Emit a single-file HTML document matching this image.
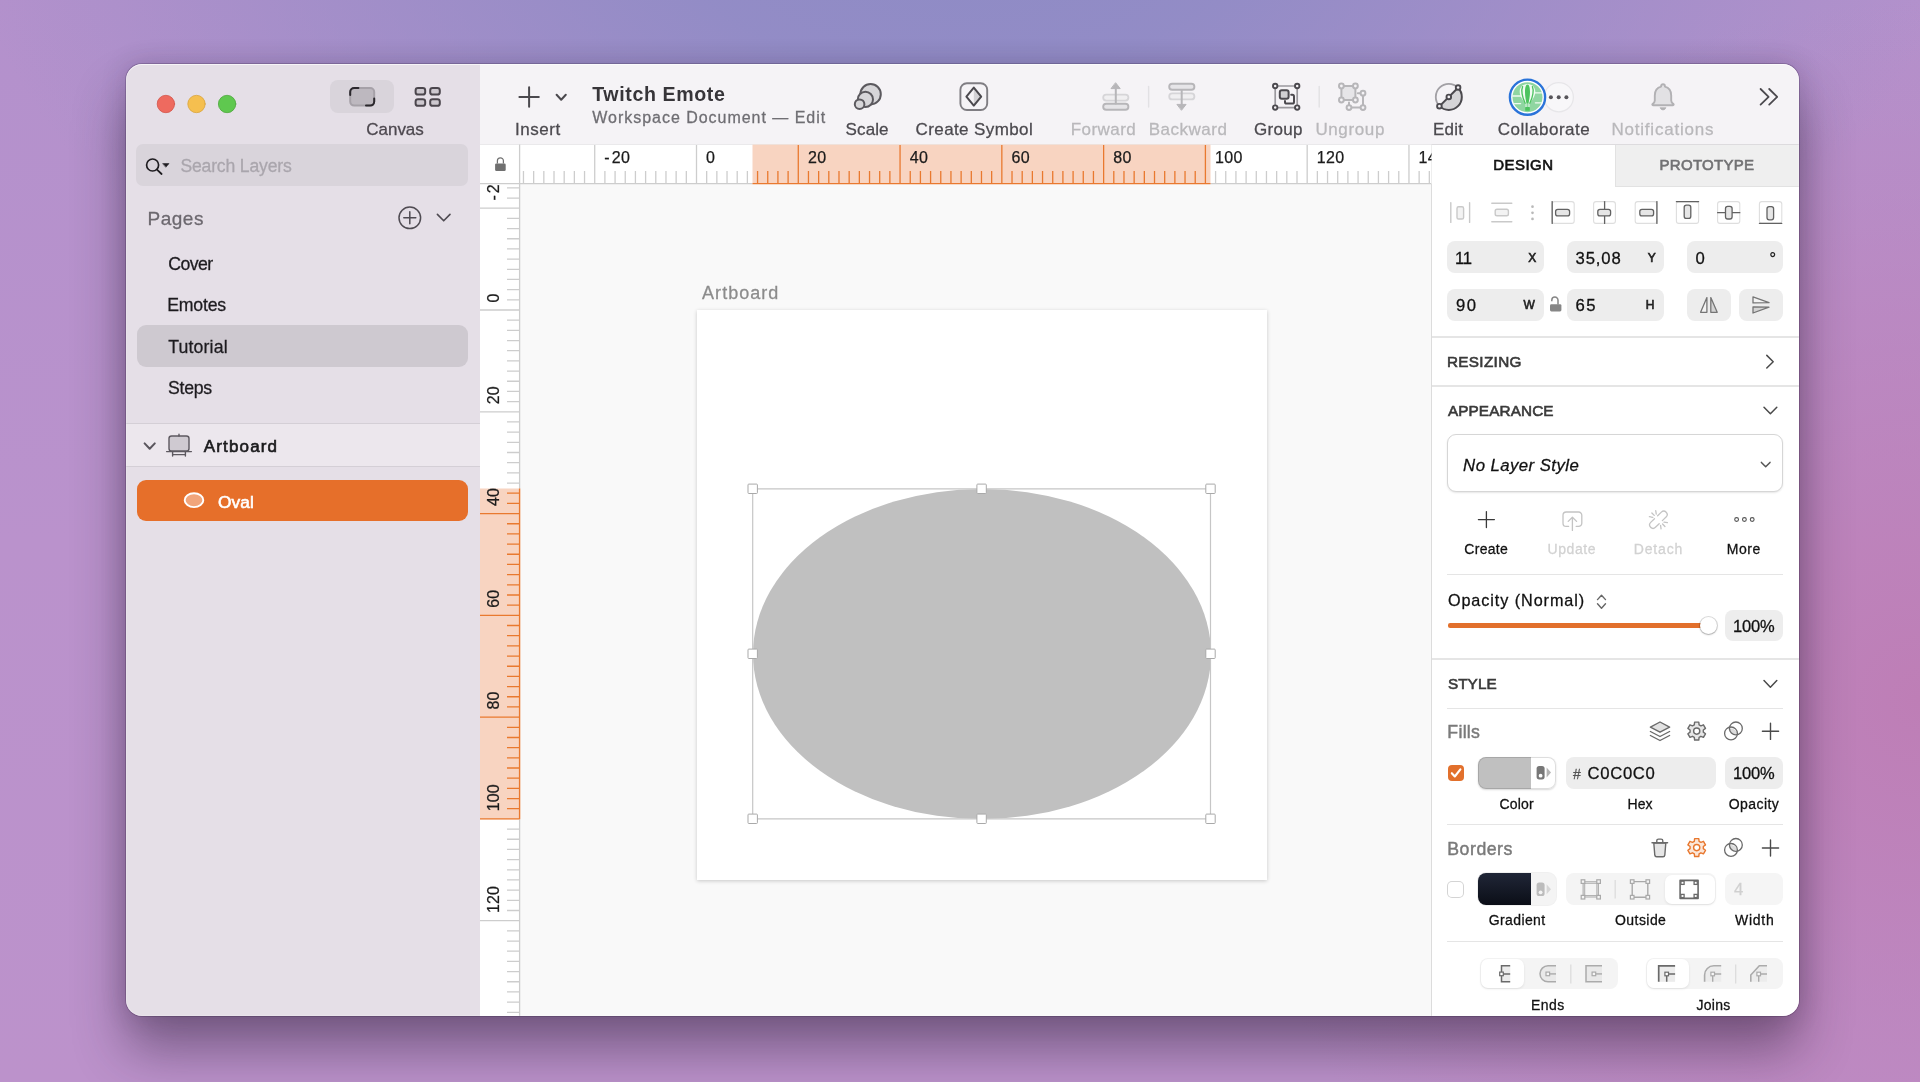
<!DOCTYPE html>
<html lang="en">
<head>
<meta charset="utf-8">
<title>Twitch Emote — Sketch</title>
<style>
html,body{margin:0;padding:0;}
body{width:1920px;height:1082px;overflow:hidden;position:relative;font-family:"Liberation Sans",sans-serif;
 background:
  radial-gradient(ellipse 990px 560px at 960px -90px, rgba(141,139,197,1) 0%, rgba(141,139,197,.85) 30%, rgba(141,139,197,0) 100%),
  radial-gradient(ellipse 700px 700px at 1920px 700px, rgba(190,126,182,1) 0%, rgba(190,126,182,0) 100%),
  linear-gradient(180deg,#b391cc 0%,#ba92cc 50%,#bc92cb 100%);
}
.abs{position:absolute;}
.t{position:absolute;white-space:nowrap;line-height:1;-webkit-text-stroke:.28px currentColor;}
.t.b{-webkit-text-stroke:0;}
.t.s{-webkit-text-stroke:.62px currentColor;}
.t.m{-webkit-text-stroke:.45px currentColor;}
#shadow{position:absolute;left:126px;top:64px;width:1673px;height:952px;border-radius:16px;
 box-shadow:0 34px 52px rgba(35,22,45,.44),0 0 26px rgba(35,20,50,.17),0 0 0 1px rgba(50,35,65,.24);}
#win{position:absolute;left:126px;top:64px;width:1673px;height:952px;overflow:hidden;border-radius:16px;will-change:transform;}
#in{position:absolute;left:-126px;top:-64px;width:1920px;height:1082px;}
#sidebar{left:126px;top:64px;width:354px;height:952px;background:#e5dfe7;}
#toolbar{left:480px;top:64px;width:1320px;height:80px;background:#f5f3f6;}
#tbline{left:480px;top:144px;width:1320px;height:1px;background:#dddbde;}
#canvas{left:520px;top:184px;width:911px;height:832px;background:#f9f9f9;}
#inspector{left:1432px;top:145px;width:368px;height:871px;background:#fff;}
#insline{left:1431px;top:145px;width:1px;height:871px;background:#dcdcdc;}
.r{position:absolute;border-radius:8px;background:#ededed;}
.hl{position:absolute;height:1px;background:#e5e5e5;}
</style>
</head>
<body>
<div id="shadow"></div>
<div id="win"><div id="in">
 <div id="sidebar" class="abs"></div>
 <div id="toolbar" class="abs"></div>
 <div id="canvas" class="abs"></div>
 <div id="inspector" class="abs"></div>
 <div id="insline" class="abs"></div>
 <div id="tbline" class="abs"></div>

 <!-- sidebar pieces -->
 <div class="abs" style="left:330px;top:80px;width:64px;height:33px;border-radius:8px;background:#d9d4db;"></div>
 <div class="abs" style="left:136.4px;top:144.2px;width:331.6px;height:41.6px;border-radius:7px;background:#d9d4db;"></div>
 <div class="abs" style="left:137px;top:325.3px;width:331px;height:41.3px;border-radius:9px;background:#cec9d0;"></div>
 <div class="abs" style="left:126px;top:423px;width:354px;height:44px;background:#ece7ed;border-top:1.5px solid #d4cfd6;border-bottom:1.5px solid #d4cfd6;box-sizing:border-box;"></div>
 <div class="abs" style="left:137px;top:479.8px;width:331px;height:40.8px;border-radius:9px;background:#e66f2a;"></div>

 <!-- canvas: artboard + oval -->
 <div class="abs" style="left:696.5px;top:310px;width:570px;height:570px;background:#fff;box-shadow:0 .5px 4px rgba(0,0,0,.2);"></div>
 <div class="abs" style="left:752.5px;top:488.5px;width:458px;height:330.8px;border-radius:50%;background:#c0c0c0;"></div>

 <svg class="abs" style="left:0;top:0" width="1920" height="1082" viewBox="0 0 1920 1082" font-family="Liberation Sans, sans-serif" font-size="16" fill="#1b1b1b" stroke="#1b1b1b" stroke-width=".25" letter-spacing=".35">
<rect x="480" y="144.6" width="951.5" height="39.4" fill="#fff" stroke="none"/>
<rect x="480" y="184" width="40" height="832" fill="#fff" stroke="none"/>
<rect x="752.5" y="144.6" width="458.0" height="39.4" fill="#f8d4c1" stroke="none"/>
<rect x="480" y="488.5" width="40" height="330.79999999999995" fill="#f8d4c1" stroke="none"/>
<defs><clipPath id="hclip"><rect x="520" y="144" width="911.5" height="41"/></clipPath><clipPath id="vclip"><rect x="480" y="184.5" width="41" height="832"/></clipPath><clipPath id="vtclip"><rect x="480" y="184.6" width="41" height="832"/></clipPath></defs>
<g clip-path="url(#hclip)">
<path d="M523.47 171V183.6M533.65 171V183.6M543.83 171V183.6M554.01 171V183.6M564.19 171V183.6M574.36 171V183.6M584.54 171V183.6M594.72 145V183.6M604.90 171V183.6M615.08 171V183.6M625.25 171V183.6M635.43 171V183.6M645.61 171V183.6M655.79 171V183.6M665.97 171V183.6M676.14 171V183.6M686.32 171V183.6M696.50 145V183.6M706.68 171V183.6M716.86 171V183.6M727.03 171V183.6M737.21 171V183.6M747.39 171V183.6M1215.58 171V183.6M1225.76 171V183.6M1235.93 171V183.6M1246.11 171V183.6M1256.29 171V183.6M1266.47 171V183.6M1276.65 171V183.6M1286.82 171V183.6M1297.00 171V183.6M1307.18 145V183.6M1317.36 171V183.6M1327.54 171V183.6M1337.71 171V183.6M1347.89 171V183.6M1358.07 171V183.6M1368.25 171V183.6M1378.43 171V183.6M1388.60 171V183.6M1398.78 171V183.6M1408.96 145V183.6M1419.14 171V183.6M1429.32 171V183.6" stroke="#cdcdcd" stroke-width="1.3" fill="none"/>
<path d="M757.57 171V183.6M767.75 171V183.6M777.92 171V183.6M788.10 171V183.6M798.28 145V183.6M808.46 171V183.6M818.64 171V183.6M828.81 171V183.6M838.99 171V183.6M849.17 171V183.6M859.35 171V183.6M869.53 171V183.6M879.70 171V183.6M889.88 171V183.6M900.06 145V183.6M910.24 171V183.6M920.42 171V183.6M930.59 171V183.6M940.77 171V183.6M950.95 171V183.6M961.13 171V183.6M971.31 171V183.6M981.48 171V183.6M991.66 171V183.6M1001.84 145V183.6M1012.02 171V183.6M1022.20 171V183.6M1032.37 171V183.6M1042.55 171V183.6M1052.73 171V183.6M1062.91 171V183.6M1073.09 171V183.6M1083.26 171V183.6M1093.44 171V183.6M1103.62 145V183.6M1113.80 171V183.6M1123.98 171V183.6M1134.15 171V183.6M1144.33 171V183.6M1154.51 171V183.6M1164.69 171V183.6M1174.87 171V183.6M1185.04 171V183.6M1195.22 171V183.6M1205.40 145V183.6" stroke="#e9792f" stroke-width="1.3" fill="none"/>
<path d="M520 183.6H752.5M1210.5 183.6H1431.5" stroke="#cdcdcd" stroke-width="1.3"/>
<path d="M752.5 183.6H1210.5" stroke="#e9792f" stroke-width="1.4"/>
<text x="604.3" y="162.7">-<tspan dx="1.7">20</tspan></text>
<text x="706.1" y="162.7">0</text>
<text x="807.9" y="162.7">20</text>
<text x="909.7" y="162.7">40</text>
<text x="1011.4" y="162.7">60</text>
<text x="1113.2" y="162.7">80</text>
<text x="1215.0" y="162.7">100</text>
<text x="1316.8" y="162.7">120</text>
<text x="1418.6" y="162.7">140</text>
</g>
<g clip-path="url(#vclip)">
<path d="M507 187.86H519.4M507 198.04H519.4M480 208.22H519.4M507 218.40H519.4M507 228.58H519.4M507 238.75H519.4M507 248.93H519.4M507 259.11H519.4M507 269.29H519.4M507 279.47H519.4M507 289.64H519.4M507 299.82H519.4M480 310.00H519.4M507 320.18H519.4M507 330.36H519.4M507 340.53H519.4M507 350.71H519.4M507 360.89H519.4M507 371.07H519.4M507 381.25H519.4M507 391.42H519.4M507 401.60H519.4M480 411.78H519.4M507 421.96H519.4M507 432.14H519.4M507 442.31H519.4M507 452.49H519.4M507 462.67H519.4M507 472.85H519.4M507 483.03H519.4M507 829.08H519.4M507 839.26H519.4M507 849.43H519.4M507 859.61H519.4M507 869.79H519.4M507 879.97H519.4M507 890.15H519.4M507 900.32H519.4M507 910.50H519.4M480 920.68H519.4M507 930.86H519.4M507 941.04H519.4M507 951.21H519.4M507 961.39H519.4M507 971.57H519.4M507 981.75H519.4M507 991.93H519.4M507 1002.10H519.4M507 1012.28H519.4" stroke="#cdcdcd" stroke-width="1.3" fill="none"/>
<path d="M507 493.20H519.4M507 503.38H519.4M480 513.56H519.4M507 523.74H519.4M507 533.92H519.4M507 544.09H519.4M507 554.27H519.4M507 564.45H519.4M507 574.63H519.4M507 584.81H519.4M507 594.98H519.4M507 605.16H519.4M480 615.34H519.4M507 625.52H519.4M507 635.70H519.4M507 645.87H519.4M507 656.05H519.4M507 666.23H519.4M507 676.41H519.4M507 686.59H519.4M507 696.76H519.4M507 706.94H519.4M480 717.12H519.4M507 727.30H519.4M507 737.48H519.4M507 747.65H519.4M507 757.83H519.4M507 768.01H519.4M507 778.19H519.4M507 788.37H519.4M507 798.54H519.4M507 808.72H519.4M480 818.90H519.4" stroke="#e9792f" stroke-width="1.3" fill="none"/>
<g clip-path="url(#vtclip)"><text letter-spacing=".1" transform="translate(499.2 200.6) rotate(-90)">-<tspan dx="1.8">20</tspan></text></g>
<g clip-path="url(#vtclip)"><text letter-spacing=".1" transform="translate(499.2 302.4) rotate(-90)">0</text></g>
<g clip-path="url(#vtclip)"><text letter-spacing=".1" transform="translate(499.2 404.2) rotate(-90)">20</text></g>
<g clip-path="url(#vtclip)"><text letter-spacing=".1" transform="translate(499.2 506.0) rotate(-90)">40</text></g>
<g clip-path="url(#vtclip)"><text letter-spacing=".1" transform="translate(499.2 607.7) rotate(-90)">60</text></g>
<g clip-path="url(#vtclip)"><text letter-spacing=".1" transform="translate(499.2 709.5) rotate(-90)">80</text></g>
<g clip-path="url(#vtclip)"><text letter-spacing=".1" transform="translate(499.2 811.3) rotate(-90)">100</text></g>
<g clip-path="url(#vtclip)"><text letter-spacing=".1" transform="translate(499.2 913.1) rotate(-90)">120</text></g>
</g>
<path d="M519.6 144.6V488.5M519.6 819.3V1016" stroke="#cdcdcd" stroke-width="1.3"/>
<path d="M519.6 488.5V819.3" stroke="#e9792f" stroke-width="1.4"/>
<path d="M480 183.6H520" stroke="#cdcdcd" stroke-width="1.3"/>
<g><rect x="495.100" y="163.400" width="10.600" height="7.600" rx="1.300" fill="#707070" stroke="none"/><path d="M497.400 163.600v-2.800a3 3 0 0 1 6 0v2.800" fill="none" stroke="#707070" stroke-width="1.250"/></g>
</svg>

 <!-- inspector pieces -->
 <div class="abs" style="left:1615px;top:145px;width:185px;height:42px;background:#efefef;border-left:1px solid #e2e2e2;border-bottom:1px solid #e2e2e2;box-sizing:border-box;"></div>
 <div class="r" style="left:1447.3px;top:241.2px;width:96.8px;height:31.6px;"></div>
 <div class="r" style="left:1566.8px;top:241.2px;width:97px;height:31.6px;"></div>
 <div class="r" style="left:1686.7px;top:241.2px;width:96.5px;height:31.6px;"></div>
 <div class="r" style="left:1447.3px;top:288.8px;width:96.8px;height:31.8px;"></div>
 <div class="r" style="left:1566.8px;top:288.8px;width:97px;height:31.8px;"></div>
 <div class="r" style="left:1686.7px;top:288.8px;width:44.3px;height:31.8px;"></div>
 <div class="r" style="left:1738.9px;top:288.8px;width:44.3px;height:31.8px;"></div>
 <div class="hl" style="left:1432px;top:336.3px;width:368px;height:1.4px;"></div>
 <div class="hl" style="left:1432px;top:385.3px;width:368px;height:1.4px;"></div>
 <div class="abs" style="left:1447.3px;top:434.3px;width:336px;height:58.2px;border-radius:9px;background:#fff;border:1px solid #d6d6d6;box-sizing:border-box;box-shadow:0 1px 2px rgba(0,0,0,.10);"></div>
 <div class="hl" style="left:1447.3px;top:573.8px;width:336px;"></div>
 <!-- slider -->
 <div class="abs" style="left:1447.5px;top:623.4px;width:262px;height:4.2px;border-radius:2.1px;background:#e2702c;"></div>
 <div class="abs" style="left:1699.8px;top:616.6px;width:17.6px;height:17.6px;border-radius:50%;background:#fff;box-shadow:0 0 0 1px rgba(0,0,0,.14),0 1px 2px rgba(0,0,0,.22);"></div>
 <div class="r" style="left:1725.2px;top:609.7px;width:58px;height:31.4px;"></div>
 <div class="hl" style="left:1432px;top:658.4px;width:368px;height:1.4px;"></div>
 <div class="hl" style="left:1447.3px;top:708px;width:336px;"></div>
 <!-- fills -->
 <div class="abs" style="left:1447.7px;top:765px;width:16.6px;height:15.8px;border-radius:4px;background:#e2702c;"></div>
 <div class="abs" style="left:1478.2px;top:756.9px;width:77.4px;height:31.7px;border-radius:8px;background:linear-gradient(90deg,#c0c0c0 0,#c0c0c0 53.5px,#fff 53.5px);box-shadow:inset 0 0 0 1px rgba(0,0,0,.13),0 1px 2px rgba(0,0,0,.16);"></div>
 <div class="r" style="left:1565.9px;top:756.9px;width:149.9px;height:31.7px;"></div>
 <div class="r" style="left:1725.2px;top:756.9px;width:58px;height:31.7px;"></div>
 <div class="hl" style="left:1447.3px;top:824.2px;width:336px;"></div>
 <!-- borders -->
 <div class="abs" style="left:1448.4px;top:881.8px;width:14.6px;height:14.8px;border-radius:4px;background:#fff;box-shadow:0 0 0 1px #d4d4d4;"></div>
 <div class="abs" style="left:1478.2px;top:873.4px;width:77.4px;height:31.8px;border-radius:8px;background:#f4f4f4;box-shadow:0 0 0 1px rgba(0,0,0,.06);overflow:hidden;"><div style="width:53px;height:100%;background:linear-gradient(180deg,#202637 0%,#0b0e17 100%);"></div></div>
 <div class="r" style="left:1565.9px;top:873.4px;width:149.9px;height:31.8px;background:#f4f4f4;"></div>
 <div class="abs" style="left:1665px;top:874.8px;width:49.6px;height:29px;border-radius:7px;background:#fff;box-shadow:0 1px 2.5px rgba(0,0,0,.09);"></div>
 <div class="r" style="left:1725.2px;top:873.4px;width:58px;height:31.8px;background:#f5f5f5;"></div>
 <div class="hl" style="left:1447.3px;top:941px;width:336px;"></div>
 <!-- ends / joins -->
 <div class="r" style="left:1480.1px;top:957.9px;width:137.8px;height:31.5px;background:#f4f4f4;"></div>
 <div class="abs" style="left:1481.2px;top:959.2px;width:43px;height:29px;border-radius:7px;background:#fff;box-shadow:0 1px 2.5px rgba(0,0,0,.09);"></div>
 <div class="r" style="left:1645.5px;top:957.9px;width:137.7px;height:31.5px;background:#f4f4f4;"></div>
 <div class="abs" style="left:1646.6px;top:959.2px;width:42.4px;height:29px;border-radius:7px;background:#fff;box-shadow:0 1px 2.5px rgba(0,0,0,.09);"></div>

 <svg class="abs" style="left:0;top:0" width="1920" height="1082" viewBox="0 0 1920 1082" fill="none" stroke-linecap="round" stroke-linejoin="round">
<!-- traffic lights -->
<circle cx="165.9" cy="104" r="8.7" fill="#ee6a5f" stroke="#d3564b" stroke-width=".8"/>
<circle cx="196.5" cy="104" r="8.7" fill="#f5bf4f" stroke="#d8a541" stroke-width=".8"/>
<circle cx="227.1" cy="104" r="8.7" fill="#5fc84f" stroke="#4fa73f" stroke-width=".8"/>
<!-- canvas toggle -->
<rect x="350.2" y="88" width="24" height="17.6" rx="4" fill="#bdb8bf" stroke="#a6a1a8" stroke-width="2"/>
<path d="M350.2 95V92a4 4 0 0 1 4-4h4.2" stroke="#2b282d" stroke-width="2"/>
<path d="M374.2 98.5v3.1a4 4 0 0 1-4 4h-4.2" stroke="#2b282d" stroke-width="2"/>
<g stroke="#4b464d" stroke-width="2" fill="#cdc8cf">
<rect x="415.6" y="88" width="9.6" height="6.6" rx="2.4"/><rect x="430.2" y="88" width="9.6" height="6.6" rx="2.4"/>
<rect x="415.6" y="99.2" width="9.6" height="6.6" rx="2.4"/><rect x="430.2" y="99.2" width="9.6" height="6.6" rx="2.4"/>
</g>
<!-- search -->
<circle cx="152.6" cy="165" r="6" stroke="#1f1d21" stroke-width="1.7"/>
<path d="M157 169.6l4.6 4.4" stroke="#1f1d21" stroke-width="1.8"/>
<path d="M163 163.6h6l-3 3.4z" fill="#1f1d21" stroke="#1f1d21" stroke-width=".6"/>
<!-- pages + / chevron -->
<circle cx="409.8" cy="217.8" r="10.8" stroke="#4f4b52" stroke-width="1.5"/>
<path d="M403.8 217.8h12M409.8 211.8v12" stroke="#4f4b52" stroke-width="1.5"/>
<path d="M437.4 214.4l6.3 6.4 6.3-6.4" stroke="#4f4b52" stroke-width="1.6"/>
<!-- artboard row -->
<path d="M144.6 443.4l5.1 5.4 5.1-5.4" stroke="#5a565d" stroke-width="2"/>
<g stroke="#5d5960" stroke-width="1.4">
<rect x="169" y="436" width="20" height="15" rx="2.6" fill="#cfcad1"/>
<path d="M179 434.2v1.8M166.6 451.6h24.8M172.6 452v4M185.4 452v4M172.6 454.6h12.8"/>
</g>
<!-- oval row icon -->
<ellipse cx="194" cy="500.2" rx="9.3" ry="6.9" fill="#f1a57b" stroke="#fff" stroke-width="1.9"/>
<!-- Insert -->
<path d="M519.4 97h19.4M529.1 87.3v19.4" stroke="#4b494e" stroke-width="2"/>
<path d="M556.6 94.8l4.6 5 4.6-5" stroke="#4b494e" stroke-width="2"/>
<!-- Scale -->
<g stroke="#5b595e" stroke-width="2" fill="#d7d6d9">
<circle cx="870.6" cy="94.2" r="10.2"/><circle cx="865.4" cy="99.4" r="7.6" /><circle cx="859.6" cy="104.2" r="4.8"/>
</g>
<!-- Create Symbol -->
<rect x="960.4" y="83.2" width="26.8" height="26.8" rx="6.5" stroke="#7f7d82" stroke-width="1.9"/>
<path d="M973.8 87.6l7.4 9-7.4 9z" fill="#d3d2d5"/>
<path d="M973.8 87.6l7.4 9-7.4 9-7.4-9z" stroke="#4b494e" stroke-width="2"/>
<!-- Forward -->
<rect x="1103.2" y="94.6" width="25.2" height="6" rx="3" fill="#f0eff1" stroke="#d6d5d8" stroke-width="1.8"/>
<rect x="1103.2" y="103.8" width="25.2" height="6" rx="3" fill="#e6e5e8" stroke="#b7b6b9" stroke-width="1.9"/>
<path d="M1115.8 103.4V88" stroke="#b7b6b9" stroke-width="2"/>
<path d="M1115.8 83l4.4 5.6h-8.8z" fill="#b7b6b9" stroke="#b7b6b9" stroke-width="1"/>
<path d="M1148.6 86.4v20.6" stroke="#e2e1e4" stroke-width="1.4"/>
<!-- Backward -->
<rect x="1169.2" y="93.4" width="25.2" height="6" rx="3" fill="#f0eff1" stroke="#d6d5d8" stroke-width="1.8"/>
<rect x="1169.2" y="83.8" width="25.2" height="6" rx="3" fill="#e6e5e8" stroke="#b7b6b9" stroke-width="1.9"/>
<path d="M1181.7 90.4V105" stroke="#b7b6b9" stroke-width="2"/>
<path d="M1181.7 110l4.4-5.6h-8.8z" fill="#b7b6b9" stroke="#b7b6b9" stroke-width="1"/>
<!-- Group -->
<path d="M1275.2 86h22v21.6h-22z" stroke="#9b999e" stroke-width="1.7"/>
<rect x="1279.8" y="90.2" width="8.8" height="8.6" rx="2" fill="#d0cfd2" stroke="#4b494e" stroke-width="2"/>
<path d="M1291.2 94.8h1.2a1.6 1.6 0 0 1 1.6 1.6v5.6a1.6 1.6 0 0 1-1.6 1.6h-5.8a1.6 1.6 0 0 1-1.6-1.6v-1" stroke="#4b494e" stroke-width="2"/>
<g fill="#f5f3f6" stroke="#4b494e" stroke-width="1.9">
<circle cx="1275.2" cy="86" r="2.2"/><circle cx="1297.2" cy="86" r="2.2"/><circle cx="1275.2" cy="107.6" r="2.2"/><circle cx="1297.2" cy="107.6" r="2.2"/>
</g>
<path d="M1319.2 86.4v20.6" stroke="#e2e1e4" stroke-width="1.4"/>
<!-- Ungroup -->
<g stroke="#b7b6b9" stroke-width="2">
<path d="M1349 105.200V102.400M1351.400 107.600H1360.600M1363 95.600V105.200M1357.800 93.200H1360.600"/>
<rect x="1341.4" y="86" width="14" height="14" rx="1.5" fill="#e6e5e8"/>
<g fill="#f5f3f6"><circle cx="1341.4" cy="86" r="2.4"/><circle cx="1355.4" cy="86" r="2.4"/><circle cx="1341.4" cy="100" r="2.4"/><circle cx="1355.4" cy="100" r="2.4"/>
<circle cx="1363" cy="93.2" r="2.4"/><circle cx="1363" cy="107.6" r="2.4"/><circle cx="1349" cy="107.6" r="2.4"/></g>
</g>
<!-- Edit -->
<path d="M1439.6 106.1A13 13 0 0 1 1458 87.7" stroke="#a2a0a5" stroke-width="1.8"/>
<path d="M1458 87.7A13 13 0 0 1 1439.6 106.1z" fill="#d5d4d7" stroke="#4b494e" stroke-width="2"/>
<g fill="#f5f3f6" stroke="#4b494e" stroke-width="1.9"><circle cx="1439.4" cy="106.2" r="2.3"/><circle cx="1448.8" cy="96.9" r="2.3"/><circle cx="1458.1" cy="87.5" r="2.3"/></g>
<!-- Collaborate: more button then avatar -->
<circle cx="1558.8" cy="97.2" r="14.6" fill="#f8f7f9" stroke="#e7e6e9" stroke-width="1.3"/>
<g fill="#57555a"><circle cx="1550.9" cy="97.2" r="2"/><circle cx="1558.7" cy="97.2" r="2"/><circle cx="1566.4" cy="97.2" r="2"/></g>
<circle cx="1527.5" cy="97.2" r="17.6" fill="#fff" stroke="#2a73d9" stroke-width="2.4"/>
<circle cx="1527.5" cy="97.2" r="15" fill="#8fd6a1"/>
<path d="M1512.800 96h9M1534.600 92.800h7.400M1535.400 102.800h6.600M1514.600 103.600h6" stroke="#eefaf0" stroke-width="1.300"/>
<path d="M1527.500 84c-5 0-7.800 3.600-7.800 7.800 0 4.600 3.400 8.400 5.800 12.200h4c2.400-3.800 5.800-7.600 5.800-12.200 0-4.200-2.800-7.800-7.800-7.800z" fill="#f1fbf3"/>
<path d="M1527.500 84.400c-1.700 0-2.500 3.400-2.500 7.600s.9 8.400 1.500 11.800h2c.6-3.400 1.500-7.600 1.500-11.800s-.8-7.600-2.500-7.600z" fill="#4cc35f"/>
<path d="M1522.600 86.600c-1.600 3.400-.6 10.400 2.600 16.600M1532.400 86.600c1.600 3.400.6 10.400-2.600 16.600" stroke="#4cc35f" stroke-width="1.300"/>
<path d="M1526 104.400v2.600M1529 104.400v2.600" stroke="#f1fbf3" stroke-width=".9"/>
<rect x="1525.200" y="107" width="4.600" height="3.800" rx=".6" fill="#4cc35f"/>
<!-- Notifications -->
<path d="M1663 84.200a1.900 1.900 0 0 1 1.900 1.900v.5c4 1 6.300 4.300 6.300 8.800v5c0 1.600 1 2.600 2.200 3.600.5.400.3 1.200-.4 1.200h-20c-.7 0-.9-.8-.4-1.200 1.200-1 2.200-2 2.200-3.600v-5c0-4.500 2.300-7.800 6.300-8.800v-.5a1.900 1.900 0 0 1 1.900-1.900z" fill="#e2e1e4" stroke="#b2b1b4" stroke-width="1.9"/>
<path d="M1660.200 108a3 3 0 0 0 5.600 0z" fill="#b2b1b4" stroke="#b2b1b4" stroke-width=".8"/>
<!-- overflow -->
<path d="M1760.600 89l8 7.800-8 7.800M1769.200 89l8 7.800-8 7.800" stroke="#4b494e" stroke-width="1.8"/>
<g stroke-width="1.4">
<path d="M1450.8 202.6V222.4M1469.6 202.6V222.4" stroke="#c9c9c9"/>
<rect x="1457" y="206.8" width="6.6" height="12.2" rx="1.6" fill="#f3f3f3" stroke="#c9c9c9"/>
<path d="M1491.8 203.2H1511.8M1491.8 221.8H1511.8" stroke="#c9c9c9"/>
<rect x="1495.2" y="209.2" width="13.2" height="6.6" rx="1.8" fill="#f3f3f3" stroke="#c9c9c9"/>
<g fill="#b9b9b9" stroke="none"><circle cx="1532.5" cy="206.7" r="1.35"/><circle cx="1532.5" cy="212.8" r="1.35"/><circle cx="1532.5" cy="218.9" r="1.35"/></g>
<rect x="1552" y="201.6" width="22.2" height="21.8" rx="2.5" stroke="#dedede" stroke-width="1.1"/>
<path d="M1552.2 201.6V223.4" stroke="#626262" stroke-width="1.3"/>
<rect x="1555.6" y="209.3" width="14" height="6.6" rx="2.2" fill="#e6e6e6" stroke="#626262" stroke-width="1.3"/>
<rect x="1593.6" y="201.6" width="21.8" height="21.8" rx="2.5" stroke="#dedede" stroke-width="1.1"/>
<path d="M1604.6 201.6V223.4" stroke="#626262" stroke-width="1.3"/>
<rect x="1597.8" y="209.3" width="12.8" height="6.6" rx="2.2" fill="#e6e6e6" stroke="#626262" stroke-width="1.3"/>
<rect x="1635.2" y="201.6" width="21.8" height="21.8" rx="2.5" stroke="#dedede" stroke-width="1.1"/>
<path d="M1656.9 201.6V223.4" stroke="#626262" stroke-width="1.3"/>
<rect x="1639.8" y="209.3" width="13.8" height="6.6" rx="2.2" fill="#e6e6e6" stroke="#626262" stroke-width="1.3"/>
<rect x="1676.4" y="201.6" width="22.2" height="21.8" rx="2.5" stroke="#dedede" stroke-width="1.1"/>
<path d="M1676.4 201.7H1698.6" stroke="#626262" stroke-width="1.3"/>
<rect x="1684.2" y="205.2" width="6.6" height="13.2" rx="2.2" fill="#e6e6e6" stroke="#626262" stroke-width="1.3"/>
<rect x="1717.6" y="201.6" width="22.2" height="21.8" rx="2.5" stroke="#dedede" stroke-width="1.1"/>
<path d="M1717.6 212.7H1739.8" stroke="#626262" stroke-width="1.3"/>
<rect x="1725.5" y="206.4" width="6.6" height="12.6" rx="2.2" fill="#e6e6e6" stroke="#626262" stroke-width="1.3"/>
<rect x="1759.4" y="201.6" width="22.4" height="21.8" rx="2.5" stroke="#dedede" stroke-width="1.1"/>
<path d="M1759.4 223.3H1781.8" stroke="#626262" stroke-width="1.3"/>
<rect x="1767" y="206.6" width="6.6" height="13.2" rx="2.2" fill="#e6e6e6" stroke="#626262" stroke-width="1.3"/>
</g>
<rect x="1550" y="304.2" width="11.4" height="7.2" rx="1.4" fill="#868686"/>
<path d="M1558 304.600v-4.400a3.100 3.100 0 0 0-6.200 0v1" stroke="#868686" stroke-width="1.500" stroke-linecap="butt"/>
<g stroke="#757575" stroke-width="1.3">
<path d="M1706.900 297.600V312.300H1700.600z" fill="#f3f3f3"/>
<path d="M1710.800 297.600V312.300H1717.200z" fill="#d4d4d4"/>
<path d="M1753 296.800L1769 302.700 1753 302.900z" fill="#f3f3f3"/>
<path d="M1753 313L1769 307.100 1753 306.900z" fill="#d4d4d4"/>
</g>
<g stroke="#4a4a4a" stroke-width="1.5">
<path d="M1766.800 355.400l6.400 6.300-6.400 6.300"/>
<path d="M1764 407.200l6.400 6.600 6.400-6.600"/>
<path d="M1764 680.600l6.400 6.600 6.400-6.600"/>
<path d="M1761.400 462.400l4.300 4.400 4.300-4.400" stroke="#555"/>
<path d="M1597.500 599.600l4-4.400 4 4.400M1597.500 603.800l4 4.400 4-4.400" stroke="#666" stroke-width="1.4"/>
</g>
<path d="M1478.400 519.600h16M1486.400 511.600v16" stroke="#3a3a3a" stroke-width="1.3"/>
<g stroke="#c4c4c4" stroke-width="1.3">
<path d="M1568.600 526.400h-2.400a3.200 3.200 0 0 1-3.200-3.200v-8a3.200 3.200 0 0 1 3.200-3.200h12.400a3.200 3.200 0 0 1 3.200 3.200v8a3.200 3.200 0 0 1-3.200 3.200h-2.400"/>
<path d="M1572.400 530.400v-12.600M1568.200 521.400l4.200-4.200 4.200 4.200"/>
<g transform="translate(1658.400 519.700) rotate(-44)">
<path d="M2.200 -3.400H7.400A3.400 3.400 0 0 1 7.400 3.400H2.200"/>
<path d="M-2.200 3.400H-7.400A3.400 3.400 0 0 1 -7.400 -3.400H-2.200"/>
<path d="M0 -6V-9.400M-2.400 -5.600L-4.400 -8.400M2.400 -5.600L4.400 -8.400M0 6V9.400M2.400 5.600L4.400 8.400M-2.400 5.600L-4.400 8.400"/>
</g>
</g>
<g stroke="#555" stroke-width="1.100"><circle cx="1736.600" cy="519.500" r="1.900"/><circle cx="1744.400" cy="519.500" r="1.900"/><circle cx="1752.200" cy="519.500" r="1.900"/></g>
<g stroke="#6a6a6a" stroke-width="1.4"><path d="M1660 722l9.600 5.100-9.600 5.100-9.600-5.100z" fill="#e2e2e2"/><path d="M1650.400 731.500l9.600 5 9.600-5M1650.400 735.500l9.600 5 9.600-5"/></g>
<path d="M1694.30 724.85 L1694.63 722.14 L1698.77 722.14 L1699.10 724.85 L1700.92 725.89 L1703.43 724.83 L1705.50 728.41 L1703.32 730.05 L1703.32 732.15 L1705.50 733.79 L1703.43 737.37 L1700.92 736.31 L1699.10 737.35 L1698.77 740.06 L1694.63 740.06 L1694.30 737.35 L1692.48 736.31 L1689.97 737.37 L1687.90 733.79 L1690.08 732.15 L1690.08 730.05 L1687.90 728.41 L1689.97 724.83 L1692.48 725.89Z" fill="#e6e6e6" stroke="#6a6a6a" stroke-width="1.4"/>
<circle cx="1696.7" cy="731.1" r="3.1" fill="#fff" stroke="#6a6a6a" stroke-width="1.4"/>
<g stroke="#6a6a6a" stroke-width="1.3"><path d="M1728.350 729.30A6.400 6.400 0 0 1 1737.400 733.40A6.400 6.400 0 0 1 1728.350 729.30z" fill="#dcdcdc" stroke="none"/><circle cx="1731" cy="733.4" r="6.400"/><circle cx="1735.900" cy="728.4" r="6.400"/></g>
<path d="M1762.400 731.3h16.200M1770.500 723.2v16.200" stroke="#4a4a4a" stroke-width="1.4"/>
<g stroke="#6a6a6a" stroke-width="1.4"><path d="M1653.800 843l1 12.200a1.800 1.800 0 0 0 1.800 1.600h6.400a1.800 1.800 0 0 0 1.800-1.600l1-12.200z" fill="#e6e6e6"/><path d="M1652 842.800h15.600M1656.800 842.600v-1.800a1.700 1.700 0 0 1 1.700-1.700h2.600a1.700 1.700 0 0 1 1.700 1.700v1.800"/></g>
<path d="M1694.30 841.35 L1694.63 838.64 L1698.77 838.64 L1699.10 841.35 L1700.92 842.39 L1703.43 841.33 L1705.50 844.91 L1703.32 846.55 L1703.32 848.65 L1705.50 850.29 L1703.43 853.87 L1700.92 852.81 L1699.10 853.85 L1698.77 856.56 L1694.63 856.56 L1694.30 853.85 L1692.48 852.81 L1689.97 853.87 L1687.90 850.29 L1690.08 848.65 L1690.08 846.55 L1687.90 844.91 L1689.97 841.33 L1692.48 842.39Z" fill="#fbe6d8" stroke="#e8772e" stroke-width="1.4"/>
<circle cx="1696.7" cy="847.6" r="3.1" fill="#fff" stroke="#e8772e" stroke-width="1.4"/>
<g stroke="#6a6a6a" stroke-width="1.3"><path d="M1728.350 845.80A6.400 6.400 0 0 1 1737.400 849.90A6.400 6.400 0 0 1 1728.350 845.80z" fill="#dcdcdc" stroke="none"/><circle cx="1731" cy="849.9" r="6.400"/><circle cx="1735.900" cy="844.9" r="6.400"/></g>
<path d="M1762.400 848.0h16.200M1770.500 839.9000000000001v16.200" stroke="#4a4a4a" stroke-width="1.4"/>
<path d="M1451.800 773.200l3 3.300 5.600-7.200" stroke="#fff" stroke-width="2.1"/>
<rect x="1536.600" y="766" width="8" height="13.400" rx="2.600" fill="#777"/><circle cx="1540.600" cy="775.7" r="1.900" fill="#fff"/><path d="M1546.600 767.6l4.400 5-4.400 5z" fill="#b4b4b4"/>
<rect x="1536.600" y="882.6" width="8" height="13.400" rx="2.600" fill="#bcbcbc"/><circle cx="1540.600" cy="892.3000000000001" r="1.900" fill="#f4f4f4"/><path d="M1546.600 884.2l4.400 5-4.400 5z" fill="#d6d6d6"/>
<g stroke-linecap="butt">
<rect x="1583.8999999999999" y="882.5" width="13.8" height="13.8" stroke="#a9a9a9" stroke-width="2.6"/><rect x="1583.8999999999999" y="882.5" width="13.8" height="13.8" stroke="#e9e9e9" stroke-width=".7"/>
<rect x="1581.20" y="879.80" width="3.6" height="3.6" fill="#f4f4f4" stroke="#a9a9a9" stroke-width="1.2" stroke-linejoin="miter"/>
<rect x="1581.20" y="895.40" width="3.6" height="3.6" fill="#f4f4f4" stroke="#a9a9a9" stroke-width="1.2" stroke-linejoin="miter"/>
<rect x="1596.80" y="879.80" width="3.6" height="3.6" fill="#f4f4f4" stroke="#a9a9a9" stroke-width="1.2" stroke-linejoin="miter"/>
<rect x="1596.80" y="895.40" width="3.6" height="3.6" fill="#f4f4f4" stroke="#a9a9a9" stroke-width="1.2" stroke-linejoin="miter"/>
<path d="M1615.200 880v18.600" stroke="#dcdcdc" stroke-width="1.3"/>
<rect x="1632.2" y="881.6" width="15.600" height="15.600" stroke="#a9a9a9" stroke-width="1.4"/>
<rect x="1630.40" y="879.80" width="3.6" height="3.6" fill="#f4f4f4" stroke="#a9a9a9" stroke-width="1.2" stroke-linejoin="miter"/>
<rect x="1630.40" y="895.40" width="3.6" height="3.6" fill="#f4f4f4" stroke="#a9a9a9" stroke-width="1.2" stroke-linejoin="miter"/>
<rect x="1646.00" y="879.80" width="3.6" height="3.6" fill="#f4f4f4" stroke="#a9a9a9" stroke-width="1.2" stroke-linejoin="miter"/>
<rect x="1646.00" y="895.40" width="3.6" height="3.6" fill="#f4f4f4" stroke="#a9a9a9" stroke-width="1.2" stroke-linejoin="miter"/>
<rect x="1680.1" y="880.4" width="18" height="18" stroke="#6a6a6a" stroke-width="1.6"/>
<rect x="1680.90" y="881.20" width="3.2" height="3.2" fill="#fff" stroke="#6a6a6a" stroke-width="1.3" stroke-linejoin="miter"/>
<rect x="1680.90" y="894.40" width="3.2" height="3.2" fill="#fff" stroke="#6a6a6a" stroke-width="1.3" stroke-linejoin="miter"/>
<rect x="1694.10" y="881.20" width="3.2" height="3.2" fill="#fff" stroke="#6a6a6a" stroke-width="1.3" stroke-linejoin="miter"/>
<rect x="1694.10" y="894.40" width="3.2" height="3.2" fill="#fff" stroke="#6a6a6a" stroke-width="1.3" stroke-linejoin="miter"/>
</g>
<g stroke-linecap="butt" stroke-linejoin="miter">
<rect x="1501.500" y="965.800" width="8.700" height="16" fill="#ececec"/><path d="M1510.200 965.800H1501.500V981.800H1510.200M1501.500 973.900H1510.200" stroke="#6a6a6a" stroke-width="1.500"/>
<rect x="1499.7" y="972.1" width="3.600" height="3.600" fill="#fff" stroke="#6a6a6a" stroke-width="1.2" stroke-linejoin="miter"/>
<path d="M1556 965.800H1548a8 8 0 0 0 0 16H1556" fill="#e9e9e9" stroke="#ababab" stroke-width="1.500"/><path d="M1548 973.900H1556" stroke="#ababab" stroke-width="1.400"/>
<rect x="1546.0" y="972.1" width="3.600" height="3.600" fill="#f6f6f6" stroke="#ababab" stroke-width="1.2" stroke-linejoin="miter"/>
<path d="M1570.800 964.400v19" stroke="#dcdcdc" stroke-width="1.300"/>
<path d="M1602 965.800H1586V981.800H1602" fill="#e9e9e9" stroke="#ababab" stroke-width="1.500"/><path d="M1594 973.900H1602" stroke="#ababab" stroke-width="1.400"/>
<rect x="1592.1000000000001" y="972.1" width="3.600" height="3.600" fill="#f6f6f6" stroke="#ababab" stroke-width="1.2" stroke-linejoin="miter"/>
<rect x="1658.700" y="965.800" width="16.400" height="16" fill="#ececec"/><path d="M1675.100 965.800H1658.700V981.800" stroke="#6a6a6a" stroke-width="1.700"/><path d="M1666.700 981.800V974H1675.100" stroke="#6a6a6a" stroke-width="1.500"/>
<rect x="1664.9" y="972.2" width="3.600" height="3.600" fill="#fff" stroke="#6a6a6a" stroke-width="1.2" stroke-linejoin="miter"/>
<path d="M1704.600 981.800V975a9.200 9.200 0 0 1 9.200-9.200H1721.200V981.800z" fill="#ececec"/><path d="M1704.600 981.800V975a9.200 9.200 0 0 1 9.200-9.200H1721.200" stroke="#ababab" stroke-width="1.600"/><path d="M1712.700 981.800V974H1721.200" stroke="#ababab" stroke-width="1.400"/>
<rect x="1710.9" y="972.2" width="3.600" height="3.600" fill="#f8f8f8" stroke="#ababab" stroke-width="1.2" stroke-linejoin="miter"/>
<path d="M1735.700 964.400v19" stroke="#dcdcdc" stroke-width="1.300"/>
<path d="M1750.800 981.800V975L1759.300 965.800H1767V981.800z" fill="#ececec"/><path d="M1750.800 981.800V975L1759.300 965.800H1767" stroke="#ababab" stroke-width="1.600"/><path d="M1758.700 981.800V974H1767" stroke="#ababab" stroke-width="1.400"/>
<rect x="1756.9" y="972.2" width="3.600" height="3.600" fill="#f8f8f8" stroke="#ababab" stroke-width="1.2" stroke-linejoin="miter"/>
</g>
<g stroke-linecap="butt">
<rect x="752.700" y="488.800" width="457.800" height="330" stroke="#c6c6c6" stroke-width="1.200"/>
<rect x="748.0" y="484.1" width="9.400" height="9.400" rx=".8" fill="#fff" stroke="#a9a9a9" stroke-width="1"/>
<rect x="976.9" y="484.1" width="9.400" height="9.400" rx=".8" fill="#fff" stroke="#a9a9a9" stroke-width="1"/>
<rect x="1205.8" y="484.1" width="9.400" height="9.400" rx=".8" fill="#fff" stroke="#a9a9a9" stroke-width="1"/>
<rect x="748.0" y="649.1" width="9.400" height="9.400" rx=".8" fill="#fff" stroke="#a9a9a9" stroke-width="1"/>
<rect x="1205.8" y="649.1" width="9.400" height="9.400" rx=".8" fill="#fff" stroke="#a9a9a9" stroke-width="1"/>
<rect x="748.0" y="814.1" width="9.400" height="9.400" rx=".8" fill="#fff" stroke="#a9a9a9" stroke-width="1"/>
<rect x="976.9" y="814.1" width="9.400" height="9.400" rx=".8" fill="#fff" stroke="#a9a9a9" stroke-width="1"/>
<rect x="1205.8" y="814.1" width="9.400" height="9.400" rx=".8" fill="#fff" stroke="#a9a9a9" stroke-width="1"/>
</g>
</svg>

 <div class="abs" style="left:126px;top:64px;width:1673px;height:952px;border-radius:16px;box-shadow:inset 0 1px 0 rgba(255,255,255,.6),inset 0 0 0 1px rgba(255,255,255,.18);"></div>
 <div id="txt"><span class="t" style="left:366.25px;top:121.00px;font-size:17px;color:#4d484f;letter-spacing:-0.018px;">Canvas</span>
<span class="t" style="left:515.00px;top:121.00px;font-size:17px;color:#4c4a4f;letter-spacing:0.521px;">Insert</span>
<span class="t b" style="left:592.20px;top:85.01px;font-size:19.6px;color:#373539;font-weight:700;letter-spacing:0.617px;">Twitch Emote</span>
<span class="t" style="left:592.30px;top:110.01px;font-size:16px;color:#6f6e73;letter-spacing:0.970px;">Workspace Document — Edit</span>
<span class="t" style="left:845.60px;top:121.00px;font-size:17px;color:#4c4a4f;letter-spacing:0.107px;">Scale</span>
<span class="t" style="left:915.60px;top:121.00px;font-size:17px;color:#4c4a4f;letter-spacing:0.387px;">Create Symbol</span>
<span class="t" style="left:1070.70px;top:121.00px;font-size:17px;color:#b9b8bb;letter-spacing:0.451px;">Forward</span>
<span class="t" style="left:1148.80px;top:121.00px;font-size:17px;color:#b9b8bb;letter-spacing:0.488px;">Backward</span>
<span class="t" style="left:1253.90px;top:121.00px;font-size:17px;color:#4c4a4f;letter-spacing:0.302px;">Group</span>
<span class="t" style="left:1315.40px;top:121.00px;font-size:17px;color:#b9b8bb;letter-spacing:0.624px;">Ungroup</span>
<span class="t" style="left:1433.00px;top:121.00px;font-size:17px;color:#4c4a4f;letter-spacing:0.243px;">Edit</span>
<span class="t" style="left:1497.80px;top:121.00px;font-size:17px;color:#4c4a4f;letter-spacing:0.491px;">Collaborate</span>
<span class="t" style="left:1611.50px;top:121.00px;font-size:17px;color:#b9b8bb;letter-spacing:0.784px;">Notifications</span>
<span class="t" style="left:180.40px;top:158.00px;font-size:17.6px;color:#aaa6ad;letter-spacing:-0.170px;">Search Layers</span>
<span class="t" style="left:147.50px;top:209.01px;font-size:19px;color:#6c686f;letter-spacing:0.507px;">Pages</span>
<span class="t" style="left:168.20px;top:256.01px;font-size:17.7px;color:#1d1b1f;letter-spacing:-0.573px;">Cover</span>
<span class="t" style="left:167.20px;top:297.01px;font-size:17.7px;color:#1d1b1f;letter-spacing:-0.204px;">Emotes</span>
<span class="t" style="left:168.20px;top:339.01px;font-size:17.7px;color:#1d1b1f;letter-spacing:0.158px;">Tutorial</span>
<span class="t" style="left:168.00px;top:380.01px;font-size:17.7px;color:#1d1b1f;letter-spacing:-0.284px;">Steps</span>
<span class="t s" style="left:203.80px;top:438.00px;font-size:17px;color:#1a1a1c;letter-spacing:1.150px;">Artboard</span>
<span class="t s" style="left:217.90px;top:494.00px;font-size:17.3px;color:#ffffff;letter-spacing:0.169px;">Oval</span>
<span class="t" style="left:702.10px;top:284.01px;font-size:18px;color:#8c8c8c;letter-spacing:1.025px;">Artboard</span>
<span class="t s" style="left:1493.20px;top:157.01px;font-size:15px;color:#111111;letter-spacing:0.465px;">DESIGN</span>
<span class="t s" style="left:1659.50px;top:157.01px;font-size:15px;color:#727274;letter-spacing:0.295px;">PROTOTYPE</span>
<span class="t" style="left:1455.00px;top:251.01px;font-size:16.7px;color:#111;letter-spacing:-0.300px;">11</span>
<span class="t s" style="left:1528.30px;top:252.01px;font-size:12px;color:#222;">X</span>
<span class="t" style="left:1575.50px;top:251.01px;font-size:16.7px;color:#111;letter-spacing:0.855px;">35,08</span>
<span class="t s" style="left:1647.80px;top:252.01px;font-size:12px;color:#222;">Y</span>
<span class="t" style="left:1695.40px;top:251.01px;font-size:16.7px;color:#111;">0</span>
<span class="t b" style="left:1769.60px;top:251.01px;font-size:16px;color:#222;font-weight:700;">°</span>
<span class="t" style="left:1456.00px;top:298.01px;font-size:16.7px;color:#111;letter-spacing:1.419px;">90</span>
<span class="t s" style="left:1523.50px;top:299.01px;font-size:12px;color:#222;">W</span>
<span class="t" style="left:1575.50px;top:298.01px;font-size:16.7px;color:#111;letter-spacing:1.419px;">65</span>
<span class="t s" style="left:1645.80px;top:299.01px;font-size:12px;color:#222;">H</span>
<span class="t s" style="left:1446.90px;top:354.00px;font-size:15.3px;color:#3a3a3a;letter-spacing:0.337px;">RESIZING</span>
<span class="t s" style="left:1447.90px;top:403.00px;font-size:15.3px;color:#3a3a3a;letter-spacing:0.116px;">APPEARANCE</span>
<span class="t" style="left:1463.10px;top:458.01px;font-size:16.8px;color:#111;font-style:italic;letter-spacing:0.429px;">No Layer Style</span>
<span class="t" style="left:1464.30px;top:542.00px;font-size:14px;color:#111;letter-spacing:0.293px;">Create</span>
<span class="t" style="left:1547.50px;top:542.00px;font-size:14px;color:#d2d2d2;letter-spacing:0.568px;">Update</span>
<span class="t" style="left:1633.70px;top:542.00px;font-size:14px;color:#d2d2d2;letter-spacing:0.846px;">Detach</span>
<span class="t" style="left:1726.70px;top:542.00px;font-size:14px;color:#111;letter-spacing:0.563px;">More</span>
<span class="t" style="left:1447.90px;top:592.02px;font-size:16.2px;color:#111;letter-spacing:0.931px;">Opacity (Normal)</span>
<span class="t" style="left:1733.10px;top:618.00px;font-size:16.5px;color:#111;letter-spacing:-0.210px;">100%</span>
<span class="t s" style="left:1447.90px;top:676.00px;font-size:15.3px;color:#3a3a3a;letter-spacing:0.086px;">STYLE</span>
<span class="t m" style="left:1447.30px;top:724.01px;font-size:17.7px;color:#7a7a7a;letter-spacing:0.302px;">Fills</span>
<span class="t" style="left:1573.00px;top:767.01px;font-size:14px;color:#555;">#</span>
<span class="t" style="left:1587.60px;top:766.00px;font-size:16.7px;color:#111;letter-spacing:0.637px;">C0C0C0</span>
<span class="t" style="left:1733.10px;top:765.01px;font-size:16.5px;color:#111;letter-spacing:-0.210px;">100%</span>
<span class="t" style="left:1499.40px;top:797.00px;font-size:14px;color:#111;letter-spacing:0.202px;">Color</span>
<span class="t" style="left:1627.50px;top:797.00px;font-size:14px;color:#111;letter-spacing:0.102px;">Hex</span>
<span class="t" style="left:1728.70px;top:797.00px;font-size:14px;color:#111;letter-spacing:0.440px;">Opacity</span>
<span class="t m" style="left:1447.30px;top:841.01px;font-size:17.7px;color:#7a7a7a;letter-spacing:0.519px;">Borders</span>
<span class="t" style="left:1734.10px;top:882.00px;font-size:16.7px;color:#d0d0d0;">4</span>
<span class="t" style="left:1488.80px;top:913.00px;font-size:14px;color:#111;letter-spacing:0.370px;">Gradient</span>
<span class="t" style="left:1615.00px;top:913.00px;font-size:14px;color:#111;letter-spacing:0.440px;">Outside</span>
<span class="t" style="left:1735.00px;top:913.00px;font-size:14px;color:#111;letter-spacing:0.750px;">Width</span>
<span class="t" style="left:1531.10px;top:998.00px;font-size:14px;color:#111;letter-spacing:0.430px;">Ends</span>
<span class="t" style="left:1696.50px;top:998.00px;font-size:14px;color:#111;letter-spacing:0.279px;">Joins</span></div>
</div></div>
</body>
</html>
